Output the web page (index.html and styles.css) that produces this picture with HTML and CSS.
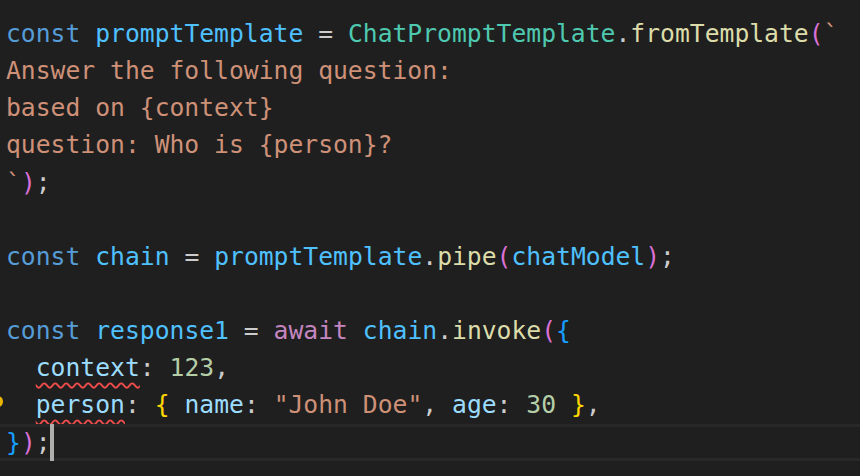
FILE: index.html
```html
<!DOCTYPE html>
<html>
<head>
<meta charset="utf-8">
<link rel="stylesheet" href="styles.css">
</head>
<body>
<div class="editor">
  <div class="line"><span class="kw">const</span> <span class="var">promptTemplate</span> <span class="pn">=</span> <span class="cls">ChatPromptTemplate</span><span class="pn">.</span><span class="fn">fromTemplate</span><span class="b2">(</span><span class="str">`</span></div>
  <div class="line"><span class="str">Answer the following question:</span></div>
  <div class="line"><span class="str">based on {context}</span></div>
  <div class="line"><span class="str">question: Who is {person}?</span></div>
  <div class="line"><span class="str">`</span><span class="b2">)</span><span class="pn">;</span></div>
  <div class="line"> </div>
  <div class="line"><span class="kw">const</span> <span class="var">chain</span> <span class="pn">=</span> <span class="var">promptTemplate</span><span class="pn">.</span><span class="fn">pipe</span><span class="b2">(</span><span class="var">chatModel</span><span class="b2">)</span><span class="pn">;</span></div>
  <div class="line"> </div>
  <div class="line"><span class="kw">const</span> <span class="var">response1</span> <span class="pn">=</span> <span class="ctl">await</span> <span class="var">chain</span><span class="pn">.</span><span class="fn">invoke</span><span class="b2">(</span><span class="b3">{</span></div>
  <div class="line">  <span class="prop err">context</span><span class="pn">:</span> <span class="num">123</span><span class="pn">,</span></div>
  <div class="line bulb-line"><span class="bulb"></span>  <span class="prop err">person</span><span class="pn">:</span> <span class="b1">{</span> <span class="prop">name</span><span class="pn">:</span> <span class="str">"John Doe"</span><span class="pn">,</span> <span class="prop">age</span><span class="pn">:</span> <span class="num">30</span> <span class="b1">}</span><span class="pn">,</span></div>
  <div class="line current"><span class="b3">}</span><span class="b2">)</span><span class="pn">;</span><span class="cursor"></span></div>
</div>
</body>
</html>
```
FILE: styles.css
```css
html, body {
  margin: 0;
  padding: 0;
  background: #1f1f1f;
}
.editor {
  padding-top: 15px;
  font-family: "DejaVu Sans Mono", "Liberation Mono", monospace;
  font-size: 24.7px;
  line-height: 37.15px;
  color: #d4d4d4;
}
.line {
  position: relative;
  padding-left: 6px;
  height: 37.15px;
  white-space: pre;
}
.current {
  box-shadow: inset 0 3px #282828, inset 0 -3px #282828;
}
.kw { color: #569cd6; }
.var { color: #4fc1ff; }
.cls { color: #4ec9b0; }
.fn { color: #dcdcaa; }
.str { color: #ce9178; }
.pn { color: #cccccc; }
.prop { color: #9cdcfe; }
.num { color: #b5cea8; }
.ctl { color: #c586c0; }
.b1 { color: #ffd700; }
.b2 { color: #da70d6; }
.b3 { color: #179fff; }
.err {
  text-decoration: underline wavy #f14c4c;
  text-decoration-thickness: 2px;
  text-underline-offset: 6px;
  text-decoration-skip-ink: none;
}
.cursor {
  position: absolute;
  top: 0;
  width: 4px;
  height: 38px;
  background: #aeafad;
  margin-left: -1px;
}
.bulb {
  position: absolute;
  left: -7px;
  top: 10px;
  width: 10px;
  height: 11px;
  border-radius: 50%;
  background: #e8b500;
}
```
